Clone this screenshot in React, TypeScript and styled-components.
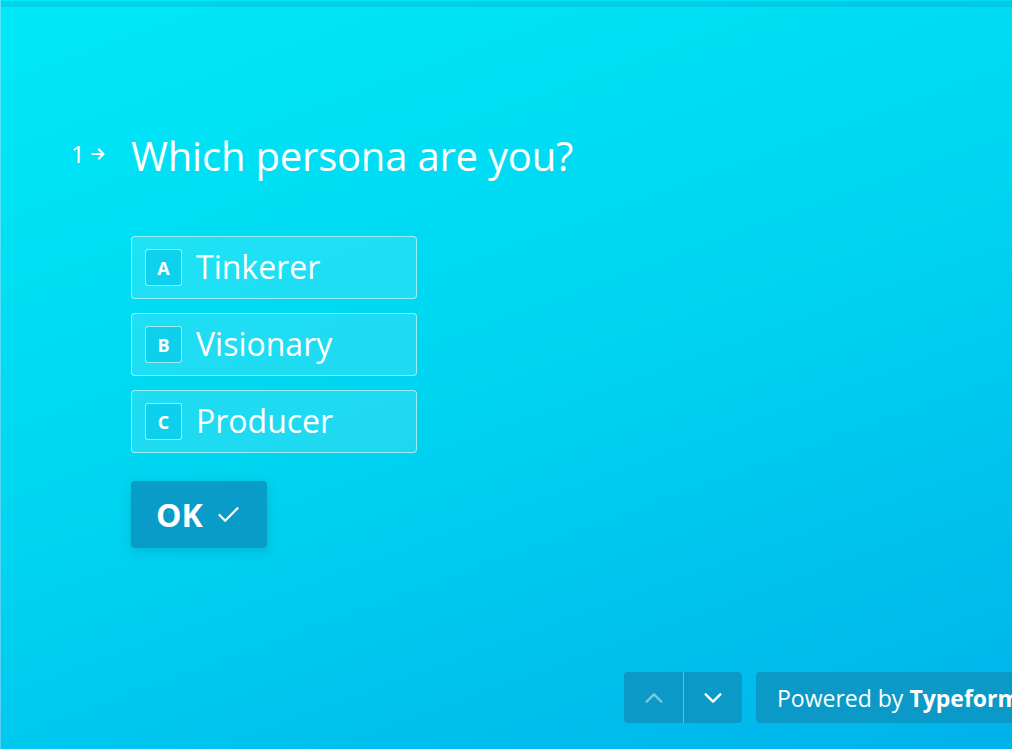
import React from "react";
import styled, { createGlobalStyle } from "styled-components";

const GlobalStyle = createGlobalStyle`
  html, body {
    margin: 0;
    padding: 0;
    height: 100%;
  }
  body {
    font-family: "Open Sans", "Noto Sans", sans-serif;
    color: #fff;
  }
`;

const Page = styled.div`
  position: relative;
  height: 100vh;
  overflow: hidden;
  display: flex;
  flex-direction: column;
  background: linear-gradient(160deg, #00e9f8 0%, #00d4f0 50%, #00b2ea 100%);
  border-left: 1px solid rgba(255, 255, 255, 0.35);
  box-sizing: border-box;
`;

const ProgressBar = styled.div`
  height: 6px;
  margin-top: 1px;
  background: rgba(0, 150, 190, 0.25);
  flex-shrink: 0;
`;

const Content = styled.main`
  padding: 124px 0 0 70px;
  flex: 1;
`;

const QuestionRow = styled.div`
  display: flex;
  align-items: baseline;
`;

const Counter = styled.span`
  display: flex;
  align-items: center;
  gap: 6px;
  width: 60px;
  font-size: 24px;
  line-height: 1;
  transform: translateY(-8px);
`;

const Question = styled.h1`
  margin: 0;
  font-size: 40px;
  font-weight: 400;
  line-height: 50px;
  letter-spacing: -0.2px;
`;

const Answers = styled.div`
  margin: 55px 0 0 60px;
  display: flex;
  flex-direction: column;
  gap: 14px;
  width: 286px;
`;

const Option = styled.button`
  display: flex;
  align-items: center;
  gap: 14px;
  height: 63px;
  padding: 0 14px 0 13px;
  box-sizing: border-box;
  border: 1px solid rgba(255, 255, 255, 0.55);
  border-radius: 4px;
  background: rgba(255, 255, 255, 0.12);
  color: #fff;
  font-family: inherit;
  text-align: left;
  cursor: pointer;
`;

const Key = styled.span`
  display: flex;
  align-items: center;
  justify-content: center;
  width: 37px;
  height: 37px;
  box-sizing: border-box;
  border: 1px solid rgba(255, 255, 255, 0.6);
  border-radius: 3px;
  background: rgba(0, 196, 232, 0.55);
  font-size: 18px;
  font-weight: 700;
`;

const Label = styled.span`
  font-size: 32px;
  line-height: 1;
  transform: translateY(-1px);
`;

const OkButton = styled.button`
  margin: 28px 0 0 60px;
  display: flex;
  align-items: center;
  gap: 12px;
  height: 67px;
  padding: 0 25px;
  border: none;
  border-radius: 4px;
  background: #099cc8;
  box-shadow: 0 3px 12px rgba(0, 60, 100, 0.18);
  color: #fff;
  font-family: inherit;
  font-size: 32px;
  font-weight: 700;
  cursor: pointer;
`;

const Footer = styled.footer`
  display: flex;
  gap: 14px;
  padding: 0 0 26px 623px;
`;

const NavGroup = styled.div`
  display: flex;
  height: 51px;
  border-radius: 4px;
  overflow: hidden;
  background: #0b9ac8;
  flex-shrink: 0;
`;

const NavButton = styled.button<{ $disabled?: boolean }>`
  display: flex;
  align-items: center;
  justify-content: center;
  width: 59px;
  border: none;
  background: transparent;
  color: ${(p) => (p.$disabled ? "rgba(255,255,255,0.45)" : "#fff")};
  cursor: pointer;
  & + & {
    border-left: 1px solid rgba(255, 255, 255, 0.35);
  }
`;

const Powered = styled.a`
  display: flex;
  align-items: center;
  height: 51px;
  padding: 0 21px;
  border-radius: 4px;
  background: #0b9ac8;
  font-size: 23px;
  white-space: nowrap;
  flex-shrink: 0;
  b {
    font-weight: 700;
    margin-left: 6px;
  }
`;

const Check = () => (
  <svg width="27" height="27" viewBox="0 0 24 24" fill="none" stroke="#fff" strokeWidth="2" strokeLinecap="round" strokeLinejoin="round">
    <path d="M4 12.5l5 5L20 6.5" />
  </svg>
);

const Arrow = () => (
  <svg width="15" height="14" viewBox="0 0 15 14" fill="none" stroke="#fff" strokeWidth="2.2" strokeLinecap="round" strokeLinejoin="round">
    <path d="M1.5 7h11M8 2.5L12.5 7 8 11.5" />
  </svg>
);

const Chevron = ({ up }: { up?: boolean }) => (
  <svg width="22" height="22" viewBox="0 0 24 24" fill="none" stroke="currentColor" strokeWidth="2.6" strokeLinecap="round" strokeLinejoin="round">
    <path d={up ? "M4 16l8-8 8 8" : "M4 8l8 8 8-8"} />
  </svg>
);

const options = [
  { key: "A", label: "Tinkerer" },
  { key: "B", label: "Visionary" },
  { key: "C", label: "Producer" },
];

export default function App() {
  return (
    <>
      <GlobalStyle />
      <Page>
        <ProgressBar />
        <Content>
          <QuestionRow>
            <Counter>
              1 <Arrow />
            </Counter>
            <Question>Which persona are you?</Question>
          </QuestionRow>
          <Answers>
            {options.map((o) => (
              <Option key={o.key}>
                <Key>{o.key}</Key>
                <Label>{o.label}</Label>
              </Option>
            ))}
          </Answers>
          <OkButton>
            OK <Check />
          </OkButton>
        </Content>
        <Footer>
          <NavGroup>
            <NavButton $disabled>
              <Chevron up />
            </NavButton>
            <NavButton>
              <Chevron />
            </NavButton>
          </NavGroup>
          <Powered>
            Powered by<b>Typeform</b>
          </Powered>
        </Footer>
      </Page>
    </>
  );
}
